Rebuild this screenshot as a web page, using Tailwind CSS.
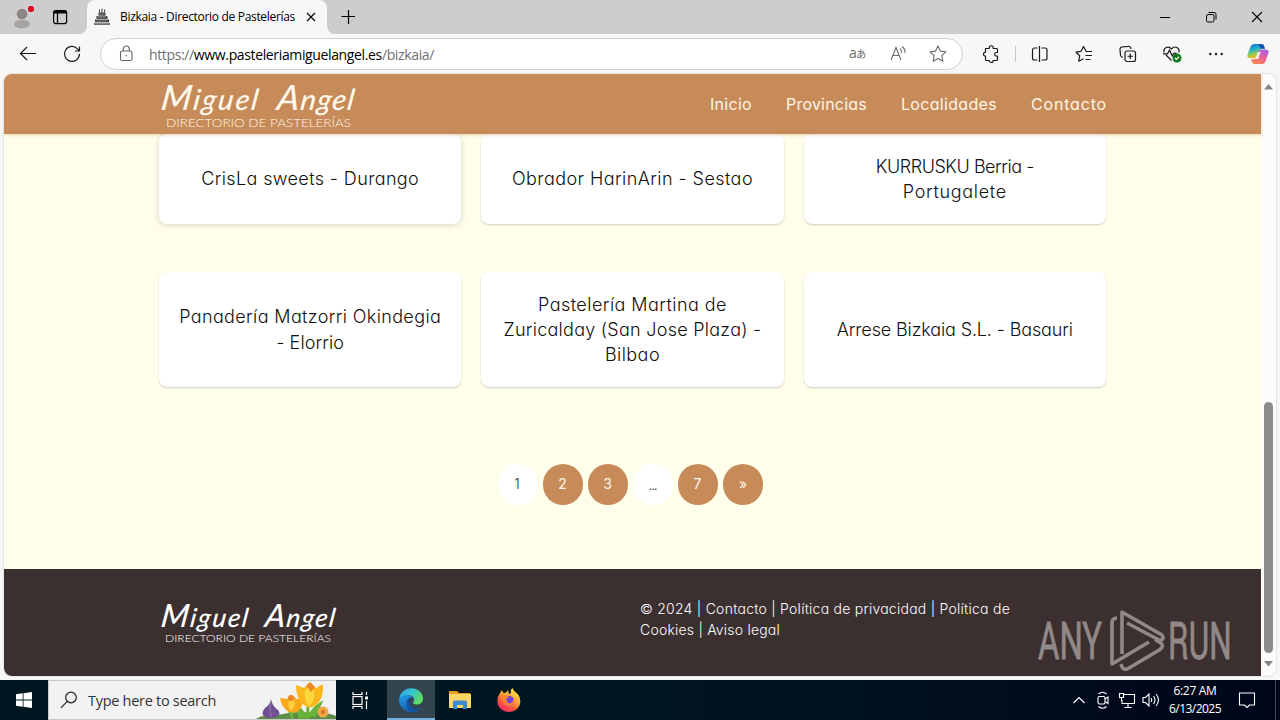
<!DOCTYPE html>
<html lang="es">
<head>
    <meta charset="UTF-8">
    <title>Bizkaia - Directorio de Pastelerías</title>
    <script src="https://cdn.jsdelivr.net/npm/@tailwindcss/browser@4"></script>
</head>
<body class="w-[1280px] h-[720px] overflow-hidden flex flex-col bg-[#f7f7f7] font-['Open_Sans',sans-serif] text-black">

    <!-- Tab strip -->
    <div class="h-[34px] shrink-0 flex bg-[#cdcdcd]">
        <div class="w-[87px] flex items-center rounded-br-lg">
            <svg class="w-6 h-6 ml-[10px]" viewBox="0 0 24 24">
                <circle cx="12" cy="9" r="5.3" fill="#8b8784"/>
                <ellipse cx="12" cy="19" rx="8" ry="4.3" fill="#a7a3a0"/>
                <circle cx="21" cy="4" r="4.6" fill="#dedede"/>
                <circle cx="21" cy="4" r="3.2" fill="#d80e28"/>
            </svg>
            <svg class="w-5 h-5 ml-4" viewBox="0 0 20 20" fill="none" stroke="#000" stroke-width="1.2">
                <rect x="3.6" y="3.6" width="13" height="13" rx="2"/>
                <path d="M3.6 5.6h13M7.5 6v10.500" stroke-width="1.3"/>
                <path d="M4 5h12" stroke-width="2.600"/>
            </svg>
        </div>
        <div class="relative w-[240px] flex items-center bg-[#f7f7f7] rounded-t-lg">
            <svg class="w-[18px] h-[18px] ml-[6px]" viewBox="0 0 18 18" fill="#444">
                <path d="M5.500 4.500h7V8h-7zM3.500 8h11v3.500h-11zM2 11.500h14v3H2zM1 15.200h16v1.500H1z"/>
                <path d="M6.500 1.500v3M9 .5v4M11.500 1.500v3" stroke="#444" stroke-width="1"/>
                <path d="M5 8h8M3 11.500h12M2 14.900h14" stroke="#e0e0e0" stroke-width=".7"/>
                <path d="M6.500 6.300h5M5 9.800h8M4 13.200h10" stroke="#aaa" stroke-width=".8" stroke-dasharray="1.500 1"/>
            </svg>
            <span data-w="175" class="ml-[9px] text-[12px] whitespace-nowrap">Bizkaia - Directorio de Pastelerías</span>
            <svg class="absolute left-[219px] top-[12px] w-[10px] h-[10px]" viewBox="0 0 10 10" stroke="#000" stroke-width="1.1"><path d="M1 1l8 8M9 1L1 9"/></svg>
            <svg class="absolute -left-2 bottom-0 w-2 h-2" viewBox="0 0 8 8"><path d="M8 0v8H0A8 8 0 0 0 8 0z" fill="#f7f7f7"/></svg>
            <svg class="absolute -right-2 bottom-0 w-2 h-2" viewBox="0 0 8 8"><path d="M0 0v8h8A8 8 0 0 1 0 0z" fill="#f7f7f7"/></svg>
        </div>
        <svg class="w-[14px] h-[14px] mt-[10px] ml-[14px]" viewBox="0 0 14 14" stroke="#000" stroke-width="1.200"><path d="M7.500 0v14M.5 6.500h14"/></svg>
        <div class="ml-auto flex items-center">
            <svg class="w-[46px] h-[34px]" viewBox="0 0 46 34" stroke="#000"><path d="M18 17.500h10"/></svg>
            <svg class="w-[46px] h-[34px]" viewBox="0 0 46 34" fill="none" stroke="#000"><rect x="18.500" y="14.500" width="7.500" height="7.500" rx="1.500"/><path d="M20.500 12.500h5.500a2 2 0 0 1 2 2v5"/></svg>
            <svg class="w-[46px] h-[34px]" viewBox="0 0 46 34" stroke="#000" stroke-width="1.100"><path d="M18 12l10 10M28 12L18 22"/></svg>
        </div>
    </div>

    <!-- Toolbar -->
    <div class="h-10 shrink-0 flex items-center">
        <svg class="w-5 h-5 ml-[18px]" viewBox="0 0 20 20" fill="none" stroke="#1a1a1a" stroke-width="1.200"><path d="M18 9.500H2.500M9 3L2.500 9.500 9 16"/></svg>
        <svg class="w-5 h-5 ml-6" viewBox="0 0 20 20" fill="none" stroke="#1a1a1a" stroke-width="1.200"><path d="M17.500 10a7.500 7.500 0 1 1-2-5.200L17.500 7M17.500 2.500V7H13"/></svg>
        <div class="w-[863px] h-8 ml-[18px] flex items-center rounded-full bg-white border border-[#d0d0d0]">
            <svg class="w-5 h-5 ml-[15px]" viewBox="0 0 20 20" fill="none" stroke="#666" stroke-width="1.100"><rect x="4.500" y="7" width="11.500" height="9.500" rx="1.800"/><path d="M7.300 7V5a3 3 0 0 1 6 0v2"/><circle cx="10.200" cy="11.700" r=".8" fill="#666" stroke="none"/></svg>
            <span data-w="285" class="ml-[13px] text-[14px] whitespace-nowrap text-[#707070]">https://<span class="text-black">www.pasteleriamiguelangel.es</span>/bizkaia/</span>
            <div class="ml-auto mr-[14px] flex items-center gap-5 text-[#6a6a6a]">
                <span class="w-5 pl-px text-[14px] leading-5 pb-0.5 whitespace-nowrap font-['Open_Sans','Noto_Sans_CJK_JP',sans-serif] tracking-[-0.5px]">a<span class="text-[10px]">あ</span></span>
                <svg class="w-5 h-5" viewBox="0 0 20 20" fill="none" stroke="currentColor" stroke-width="1.100"><path d="M3 16L8 3.500 13 16M4.800 11.500h6.400M12 4.500q2 1.800 1.500 4.500M14 2.500q3.500 2.500 3 6.500"/></svg>
                <svg class="w-5 h-5" viewBox="0 0 20 20" fill="none" stroke="currentColor" stroke-width="1.100" stroke-linejoin="round"><path d="M10 2l2.400 5.100 5.500.7-4 3.900 1 5.600L10 14.600l-4.900 2.700 1-5.600-4-3.900 5.500-.7z"/></svg>
            </div>
        </div>
        <svg class="w-5 h-5 ml-[18px]" viewBox="0 0 20 20" fill="none" stroke="#1a1a1a" stroke-width="1.200" stroke-linejoin="round"><path d="M4.500 4.500h3.700a2.100 2.100 0 1 1 4 0h3.300a1 1 0 0 1 1 1v3h-1a1.800 1.800 0 0 0 0 3.700h1v3.300a1 1 0 0 1-1 1h-3.300a2 2 0 0 1-4 0H5.500a1 1 0 0 1-1-1v-3.300a2 2 0 0 1 0-4z"/></svg>
        <div class="w-px h-4 ml-[14px] bg-[#c6c6c6]"></div>
        <div class="ml-[14px] flex items-center gap-6">
            <svg class="w-5 h-5" viewBox="0 0 20 20" fill="none" stroke="#1a1a1a" stroke-width="1.200"><path d="M9.500 2v16M7.500 4H4.500a2 2 0 0 0-2 2v8a2 2 0 0 0 2 2h3M11.500 4H15a2 2 0 0 1 2 2v8a2 2 0 0 1-2 2h-3.500"/></svg>
            <svg class="w-5 h-5" viewBox="0 0 20 20" fill="none" stroke="#1a1a1a" stroke-width="1.200" stroke-linejoin="round"><path d="M18 7.500h-5.800L9.500 2.500 7 7.300l-5 .9 3.700 3.600-1 5.400 4.800-2.500M11.500 11.500H18M11.500 15.500h5"/></svg>
            <svg class="w-5 h-5" viewBox="0 0 20 20" fill="none" stroke="#1a1a1a" stroke-width="1.200"><rect x="7" y="7" width="10.500" height="10.500" rx="2"/><path d="M12.250 9.500v5.500M9.500 12.250H15M5 13.500A3 3 0 0 1 2.500 11L2 5.500A2.300 2.300 0 0 1 4 3l6-.7a2.500 2.500 0 0 1 2.800 1.700l.2.800"/></svg>
            <svg class="w-5 h-5 overflow-visible" viewBox="0 0 20 20" fill="none" stroke="#1a1a1a" stroke-width="1.200"><path d="M2.200 8.500C.8 4 6.500 1 9.500 5c3-4 8.800-1.200 7.300 3.500M9.500 16.500L4 11M1 9.800h4.500L7.500 6l2.700 6 1.500-2.700h3"/><circle cx="15" cy="14" r="4.500" fill="#117a1a" stroke="none"/><path d="M12.900 14l1.500 1.500 2.700-2.900" stroke="#fff"/></svg>
            <svg class="w-5 h-5" viewBox="0 0 20 20" fill="#1a1a1a"><circle cx="4.300" cy="10" r="1.200"/><circle cx="10" cy="10" r="1.200"/><circle cx="15.700" cy="10" r="1.200"/></svg>
        </div>
        <svg class="w-[22px] h-[22px] ml-[21px]" viewBox="0 0 22 22">
            <defs>
                <linearGradient id="cp1" x1="0" y1="0" x2=".3" y2="1"><stop offset="0" stop-color="#1769d6"/><stop offset=".45" stop-color="#22b4c9"/><stop offset=".75" stop-color="#9bcc47"/><stop offset="1" stop-color="#f5bd24"/></linearGradient>
                <linearGradient id="cp2" x1=".8" y1="0" x2=".2" y2="1"><stop offset="0" stop-color="#a561ef"/><stop offset=".5" stop-color="#ef5f92"/><stop offset="1" stop-color="#f78b44"/></linearGradient>
            </defs>
            <path d="M7 1h7.500q2 0 2.600 2l.8 2.800h-3q-1.700 0-2.300 2l-1.500 5.500q-.6 2-2.600 2H3.500Q-.3 15.300.5 12L3.600 3.500Q4.600 1 7 1z" fill="url(#cp1)"/>
            <path d="M15 21H7.500q-2 0-2.600-2l-.7-2.700H7q2 0 2.600-2L11.200 8.500q.6-2.100 2.600-2.100h4.700q3.700 0 3 3.500l-3.100 8.500Q17.400 21 15 21z" fill="url(#cp2)"/>
            <path d="M11 1h3.500q2 0 2.600 2l.8 2.800h-3q-1.300 0-2-1.800z" fill="#1c4fbe"/>
            <path d="M10.800 9l-1.300 4.500q-.5 2-2 2.600h3.800l1.400-5q.4-1.800 1.600-2.100z" fill="#f7f7f7"/>
        </svg>
    </div>

    <!-- Web page -->
    <div class="h-[602px] shrink-0 ml-1 w-[1272px] flex rounded-lg overflow-hidden bg-[#fcfcfc] shadow-[0_0_2px_#bbb] font-[Inter,sans-serif] [font-feature-settings:'cv11','ss03']">
        <div class="w-[1257px] flex flex-col bg-[#ffffec]">
            <header class="relative z-10 h-[60px] shrink-0 flex bg-[#c68b59] shadow-[0_1px_3px_rgba(198,139,89,0.4)]">
                <svg class="w-[200px] h-[60px] ml-[155px]" viewBox="0 0 200 60" fill="#fff8ea">
                    <g font-family="Lato" font-style="italic" font-weight="500" font-size="35" transform="translate(1 36) skewX(-8)">
                        <text textLength="97" lengthAdjust="spacing">M<tspan font-size="29">iguel</tspan></text>
                        <text x="116" textLength="77" lengthAdjust="spacing">A<tspan font-size="29">ngel</tspan></text>
                    </g>
                    <text x="7" y="53" font-family="Lato" font-weight="300" font-size="11.500" textLength="185" lengthAdjust="spacingAndGlyphs">DIRECTORIO DE PASTELERÍAS</text>
                </svg>
                <nav class="ml-auto mr-[154px] mb-px flex items-center gap-[34px] text-[16px] text-[#fff5e6] whitespace-nowrap">
                    <a data-w="42">Inicio</a>
                    <a data-w="81">Provincias</a>
                    <a data-w="96">Localidades</a>
                    <a data-w="76">Contacto</a>
                </nav>
            </header>

            <main class="flex-1">
                <div class="ml-[155px] w-[947px] grid grid-cols-3 gap-x-5 gap-y-12 text-[18px] leading-[25.2px] font-light text-[#111] text-center whitespace-nowrap">
                    <div class="h-[90px] flex flex-col items-center justify-center rounded-lg bg-white shadow-[0_1px_6px_rgba(0,0,0,0.18)]">
                        <span data-w="218">CrisLa sweets - Durango</span>
                    </div>
                    <div class="h-[90px] flex flex-col items-center justify-center rounded-lg bg-white shadow-[0_1px_2px_rgba(0,0,0,0.2)]">
                        <span data-w="241">Obrador HarinArin - Sestao</span>
                    </div>
                    <div class="h-[90px] flex flex-col items-center justify-center rounded-lg bg-white shadow-[0_1px_2px_rgba(0,0,0,0.2)]">
                        <span data-w="158">KURRUSKU Berria -</span>
                        <span data-w="104">Portugalete</span>
                    </div>
                    <div class="h-[115px] flex flex-col items-center justify-center rounded-lg bg-white shadow-[0_1px_2px_rgba(0,0,0,0.2)]">
                        <span data-w="262">Panadería Matzorri Okindegia</span>
                        <span data-w="68">- Elorrio</span>
                    </div>
                    <div class="h-[115px] flex flex-col items-center justify-center rounded-lg bg-white shadow-[0_1px_2px_rgba(0,0,0,0.2)]">
                        <span data-w="189">Pastelería Martina de</span>
                        <span data-w="258">Zuricalday (San Jose Plaza) -</span>
                        <span data-w="55">Bilbao</span>
                    </div>
                    <div class="h-[115px] flex flex-col items-center justify-center rounded-lg bg-white shadow-[0_1px_2px_rgba(0,0,0,0.2)]">
                        <span data-w="236">Arrese Bizkaia S.L. - Basauri</span>
                    </div>
                </div>

                <div class="mt-[77px] ml-[494px] flex gap-[5px] text-[14px] text-[#fff8ea]">
                    <span class="w-10 h-[41px] pr-0.5 pb-0.5 flex items-center justify-center rounded-full bg-white text-[#333] font-light">1</span>
                    <span class="w-10 h-[41px] pr-px pb-0.5 flex items-center justify-center rounded-full bg-[#c68b59]">2</span>
                    <span class="w-10 h-[41px] pr-px pb-0.5 flex items-center justify-center rounded-full bg-[#c68b59]">3</span>
                    <span class="w-10 h-[41px] pr-px flex items-center justify-center rounded-full bg-white text-[#333] font-light"><span data-w="8">...</span></span>
                    <span class="w-10 h-[41px] pr-px pb-0.5 flex items-center justify-center rounded-full bg-[#c68b59]">7</span>
                    <span class="w-10 h-[41px] pr-px pb-0.5 flex items-center justify-center rounded-full bg-[#c68b59]"><span data-w="7">»</span></span>
                </div>
            </main>

            <footer class="relative h-[107px] shrink-0 flex bg-[#3c2f2f] text-white">
                <svg class="w-[180px] h-[60px] ml-[155px] mt-[23px]" viewBox="0 0 180 60" fill="#fff">
                    <g font-family="Lato" font-style="italic" font-weight="500" font-size="32" transform="translate(1 35) skewX(-8)">
                        <text textLength="87" lengthAdjust="spacing">M<tspan font-size="26">iguel</tspan></text>
                        <text x="104" textLength="70" lengthAdjust="spacing">A<tspan font-size="26">ngel</tspan></text>
                    </g>
                    <text x="6" y="50" font-family="Lato" font-weight="300" font-size="10.500" textLength="166" lengthAdjust="spacingAndGlyphs">DIRECTORIO DE PASTELERÍAS</text>
                </svg>
                <div class="ml-[301px] mt-[29px] flex flex-col items-start text-[14px] leading-[21px] font-[350] whitespace-nowrap">
                    <span data-w="370">© 2024 | Contacto | Política de privacidad | Política de</span>
                    <span data-w="140">Cookies | Aviso legal</span>
                </div>
                <!-- Watermark over the footer -->
                <svg class="absolute left-[1031px] top-[35px] w-[226px] h-[72px]" viewBox="0 0 226 72" fill="#918888">
                    <g font-family="Roboto" font-size="51">
                        <text transform="translate(3 55) scale(.66 1)" textLength="97" lengthAdjust="spacingAndGlyphs" stroke="#918888" stroke-width=".8">ANY</text>
                        <text transform="translate(133 55) scale(.63 1)" textLength="101" lengthAdjust="spacingAndGlyphs" stroke="#918888" stroke-width=".8">RUN</text>
                    </g>
                    <g fill="none" stroke="#918888" stroke-width="3.600" stroke-linejoin="round">
                        <path d="M87 50V8l40 23q3 4-2 5.500L92 19"/>
                        <path d="M82 14q-5 0-5 5v41l37-22"/>
                        <path d="M86 60q2 8 8 4l31-18.500q5-4 0-7l-5-3"/>
                    </g>
                </svg>
            </footer>
        </div>
        <!-- Scrollbar -->
        <div class="w-[15px] flex flex-col items-center">
            <svg class="w-[9px] h-[6px] mt-[10px]" viewBox="0 0 9 6"><path d="M0 5.500L4.500 0 9 5.500z" fill="#858585"/></svg>
            <div class="mt-[312px] w-[9px] h-[251px] rounded-full bg-[#8b8b8b]"></div>
            <svg class="w-[9px] h-[6px] mt-2" viewBox="0 0 9 6"><path d="M0 0l4.500 5.500L9 0z" fill="#858585"/></svg>
        </div>
    </div>

    <!-- Taskbar -->
    <div class="mt-1 h-10 shrink-0 flex bg-linear-to-r from-[#001620] via-[#001620] to-[#00061a] text-white">
        <div class="w-12 flex items-center justify-center">
            <svg class="w-4 h-4" viewBox="0 0 16 16" fill="#fff"><path d="M0 2.200l6.700-.9v6.300H0zM7.500 1.200L16 0v7.600H7.500zM0 8.400h6.700v6.300L0 13.800zM7.500 8.400H16V16l-8.500-1.200z"/></svg>
        </div>
        <div class="w-72 flex items-center bg-[#f2f2f2] border-y border-l border-[#c9c9c9] text-[#333]">
            <svg class="w-[18px] h-[18px] ml-[11px]" viewBox="0 0 18 18" fill="none" stroke="#222" stroke-width="1.200"><circle cx="11" cy="6.500" r="5.300"/><path d="M7.200 10.300L1 16.800"/></svg>
            <span data-w="128" class="ml-[10px] pt-0.5 text-[14.500px] whitespace-nowrap">Type here to search</span>
            <svg class="w-[80px] h-[38px] ml-auto" viewBox="0 0 80 38">
                <path d="M0 38Q8 33 22 34q18-5 33-2 16-1 25 3v3z" fill="#5c8c45"/>
                <path d="M36 38q1-8-6-12M52 38q-1-10 1-18M52 36q7-10 12-13l-6 13M52 37q-8-8-10-12l2 13" stroke="#68b33a" stroke-width="3" fill="#68b33a"/>
                <path d="M15 18q1 7 7 11 4 5-2 7-6 2-11 0-5-3 0-9 5-3 6-9z" fill="#705092"/><path d="M15 20q-2 8 0 16" stroke="#9477b4" fill="none"/>
                <path d="M24 17l7 1 5-4 5 4 7-1q-2 11-7 14-6 2-11-2-5-5-6-12z" fill="#f9aa1c"/><path d="M36 14q-7 8-1 16 7-7 1-16z" fill="#ffd03c"/><circle cx="35" cy="17" r="3" fill="#e98520"/>
                <path d="M40 4l8 3 6-6 6 6 7-4q1 15-7 21-6 5-12 0-8-6-8-20z" fill="#fbb81d"/><path d="M54 2q-10 11-1 24 10-12 1-24z" fill="#ffd83e"/><path d="M50 5l4-4 5 5-4 5z" fill="#ee8a22"/>
                <circle cx="67" cy="31" r="5.500" fill="#f0a848"/><circle cx="67" cy="31" r="2.200" fill="#d97426"/>
            </svg>
        </div>
        <div class="w-[51px] flex items-center">
            <svg class="w-5 h-5 ml-[14px]" viewBox="0 0 20 20" fill="none" stroke="#fff" stroke-width="1.200"><rect x="3" y="6.500" width="9" height="8"/><path d="M3 2v2.500h9V2M3 19v-2.500h9V19M16.500 2v3M16.500 11v8"/><path d="M15 8h3" stroke-width="3"/></svg>
        </div>
        <div class="w-12 flex items-center justify-center bg-[#33464f] border-b-2 border-[#76b0e0]">
            <svg class="w-6 h-6 mt-[2px]" viewBox="0 0 24 24">
                <defs>
                    <linearGradient id="eg1" x1="0" y1="0" x2="1" y2=".5"><stop offset="0" stop-color="#2b9fe0"/><stop offset=".5" stop-color="#35c1d5"/><stop offset="1" stop-color="#5fda62"/></linearGradient>
                    <linearGradient id="eg2" x1="0" y1="0" x2=".6" y2="1"><stop offset="0" stop-color="#239ee6"/><stop offset="1" stop-color="#1557a8"/></linearGradient>
                </defs>
                <path d="M.2 11C1 4.500 6 .2 12 .2c7 0 12 4.800 12 10.300 0 4-3 6-6.300 6-3 0-4.200-1.200-3.700-2.200 2.500-2.800.500-7-4-7C5.500 7.300 2 9 .2 11z" fill="url(#eg1)"/>
                <path d="M.2 11C3 6 12 5.800 14 10.500c-6-2.500-9 7-1 10.500 3 1 6.500.2 8.500-1.200-5 6.500-14 4.800-18 .5C.8 17.500-.2 14 .2 11z" fill="url(#eg2)"/>
                <path d="M12 9.200c-6 1.500-5.700 9-1.500 13 4.500 2 8.500 0 11-2.400-8 3.500-14.500-4.300-9.500-10.600z" fill="#1352a1"/>
            </svg>
        </div>
        <div class="w-[49px] flex items-center justify-center">
            <svg class="w-[22px] h-[18px]" viewBox="0 0 22 18"><path d="M0 0h8l2 2h11v6H0z" fill="#e69d1a"/><path d="M0 3h22v14H0z" fill="#fcd667"/><path d="M4 18v-7q0-1.500 1.500-1.500h11Q18 9.500 18 11v7h-4v-4H8v4z" fill="#3b8cd0"/><path d="M8 14h6v3H8z" fill="#fcd667"/></svg>
        </div>
        <div class="w-[49px] flex items-center justify-center">
            <svg class="w-6 h-6" viewBox="0 0 24 24">
                <defs><linearGradient id="ff" x1=".8" y1="0" x2=".2" y2="1"><stop offset="0" stop-color="#fff04b"/><stop offset=".4" stop-color="#ffa436"/><stop offset=".7" stop-color="#ff5540"/><stop offset="1" stop-color="#e81e78"/></linearGradient></defs>
                <path d="M3 5l2-3 1.500 3L9 4.500 11 2l1 4 2-1q-1-3 1.500-5 1 3 4 5l2 2q3 5 1 10.500Q19.500 24 12 24 4 24 1 17-.8 10 3 5z" fill="url(#ff)"/>
                <circle cx="12" cy="13" r="5.200" fill="#7740cf"/><path d="M4 8q5-2 9 2-3 0-3 2 5 3 7-1 1 8-6 7Q5 17 4 8z" fill="#ff8a2c" opacity=".9"/><path d="M9 11q4-3 7 1-1 4-5 3z" fill="#6c44d8"/>
            </svg>
        </div>
        <div class="ml-auto flex items-center">
            <div class="flex items-center gap-1">
                <svg class="w-5 h-5" viewBox="0 0 20 20" fill="none" stroke="#fff" stroke-width="1.200"><path d="M4.500 13L10 7.500l5.500 5.500"/></svg>
                <svg class="w-5 h-5" viewBox="0 0 20 20" fill="none" stroke="#fff" stroke-width="1.100"><rect x="5" y="6.500" width="7" height="7.500" rx="1.500"/><path d="M12 9l3-2v6.500l-3-2M5.500 4q4-3.500 8 0M5.500 16.500q4 3.500 8 0"/></svg>
                <svg class="w-5 h-5" viewBox="0 0 20 20" fill="none" stroke="#fff" stroke-width="1.100"><path d="M7 4.500h10.500v9H5V10M11 13.500V17M7.500 17.500h7M2.500 3.500h4v4h-4zM4.500 7.500V11"/></svg>
                <svg class="w-5 h-5" viewBox="0 0 20 20" fill="none" stroke="#fff" stroke-width="1.100"><path d="M2 7.500h2.500L8 4v12l-3.500-3.500H2zM10 8q1.500 2 0 4M12.500 6q3 4 0 8M15 4q5 6 0 12"/></svg>
            </div>
            <div class="ml-[6px] w-[56px] flex flex-col items-center text-[12px] leading-[18px] whitespace-nowrap">
                <span data-w="43">6:27 AM</span>
                <span data-w="52">6/13/2025</span>
            </div>
            <svg class="w-5 h-5 ml-[14px] mr-[18px]" viewBox="0 0 20 20" fill="none" stroke="#fff" stroke-width="1.100"><path d="M2.500 3h15v12h-5L10 17.500 7.500 15h-5z"/></svg>
            <div class="w-px h-10 mr-[4px] bg-[#3a4453]"></div>
        </div>
    </div>

    <script>
        // Track each label out to its set width, once the styles are in
        window.addEventListener('load', () => {
            document.querySelectorAll('[data-w]').forEach((el) => {
                const range = document.createRange();
                range.selectNodeContents(el);
                const natural = range.getBoundingClientRect().width;
                el.style.letterSpacing = (el.dataset.w - natural) / el.textContent.length + 'px';
            });
        });
    </script>
</body>
</html>
